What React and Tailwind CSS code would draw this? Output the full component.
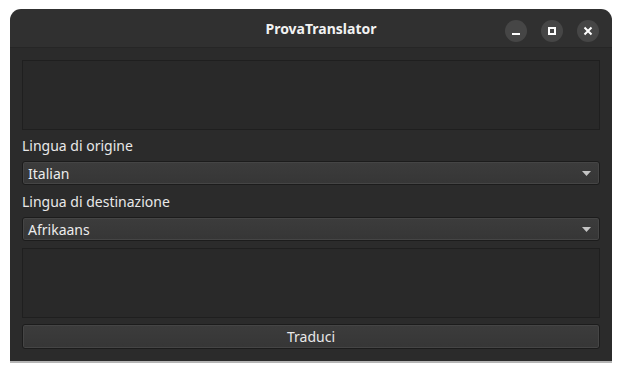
export default function App() {
  return (
    <div className="w-[622px] h-[372px] bg-white overflow-hidden" style={{ fontFamily: '"Noto Sans", "DejaVu Sans", sans-serif' }}>
      <div className="ml-[10px] mt-[9px] w-[602px]">
        {/* Title bar */}
        <div className="relative h-[39px] bg-[#303030] rounded-t-[11px] border-b border-[#262626] flex items-center justify-center pl-[20px]">
          <span className="text-[14px] font-bold text-[#f2f2f2]">ProvaTranslator</span>
          <div className="absolute right-[13px] top-[11px] flex gap-[14px]">
            <button className="w-[22px] h-[22px] rounded-full bg-[#464646] flex items-center justify-center">
              <span className="block w-[8px] h-[2px] bg-white mt-[5px]" />
            </button>
            <button className="w-[22px] h-[22px] rounded-full bg-[#464646] flex items-center justify-center">
              <span className="block w-[8px] h-[8px] border-2 border-white" />
            </button>
            <button className="w-[22px] h-[22px] rounded-full bg-[#464646] flex items-center justify-center">
              <svg width="10" height="10" viewBox="0 0 10 10">
                <path d="M1.5 1.5 L8.5 8.5 M8.5 1.5 L1.5 8.5" stroke="white" strokeWidth="2" />
              </svg>
            </button>
          </div>
        </div>

        {/* Body */}
        <div className="bg-[#2b2b2b] px-[12px] pt-[12px] pb-[12px] flex flex-col">
          <div className="h-[70px] bg-[#292929] border border-[#1f1f1f]" />

          <div className="h-[31px] flex items-center text-[14px] text-[#e8e8e8]">Lingua di origine</div>
          <Combo value="Italian" />

          <div className="h-[32px] flex items-center text-[14px] text-[#e8e8e8]">Lingua di destinazione</div>
          <Combo value="Afrikaans" />

          <div className="mt-[7px] h-[70px] bg-[#292929] border border-[#1f1f1f]" />

          <button className="mt-[6px] h-[25px] rounded-[3px] border border-[#1c1c1c] bg-gradient-to-b from-[#3c3c3c] to-[#363636] shadow-[inset_0_0_0_1px_#454545] text-[14px] text-[#e8e8e8] flex items-center justify-center">
            Traduci
          </button>
        </div>
        <div className="h-[2px] bg-[#b5b5b5]" />
      </div>
    </div>
  );
}

function Combo({ value }) {
  return (
    <div className="h-[24px] rounded-[3px] border border-[#1c1c1c] bg-gradient-to-b from-[#3c3c3c] to-[#363636] shadow-[inset_0_0_0_1px_#454545] flex items-center justify-between pl-[5px] pr-[8px]">
      <span className="text-[14px] text-[#ececec]">{value}</span>
      <svg width="9" height="5" viewBox="0 0 9 5">
        <path d="M0 0 H9 L4.5 5 Z" fill="#c4c4c4" />
      </svg>
    </div>
  );
}
